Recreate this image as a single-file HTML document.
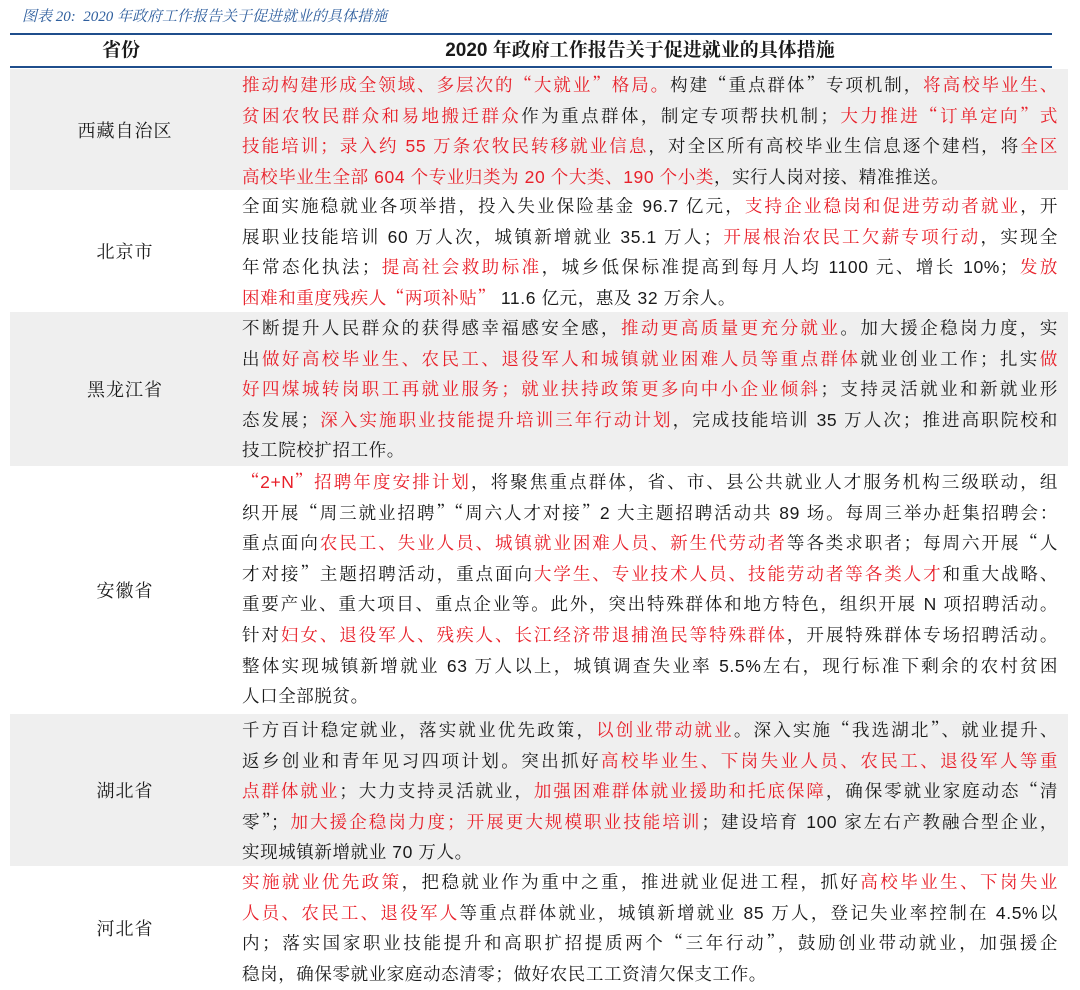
<!DOCTYPE html>
<html><head><meta charset="utf-8"><style>
*{margin:0;padding:0;box-sizing:border-box}
body{width:1080px;height:990px;background:#fff;font-family:"Liberation Sans","Noto Serif CJK SC",serif;color:#1a1a1a;position:relative;overflow:hidden}
.title{position:absolute;left:22px;top:5px;font-size:15px;font-style:italic;color:#2f5f9e;font-family:"Liberation Serif","Noto Serif CJK SC",serif}
.hl{position:absolute;left:10px;width:1042px;height:2px;background:#1f4e8c}
.hdr{position:absolute;top:35px;height:32px;font-size:19px;font-weight:bold;line-height:32px;text-align:center}
.row{position:absolute;left:10px;width:1058px}
.g{background:#efefef}
.prov{position:absolute;left:0;width:230px;top:0;bottom:0;display:flex;align-items:center;justify-content:center;font-size:18px;letter-spacing:1px}
.txt{position:absolute;left:232px;width:816px;top:1px;font-size:17.5px}
.txt div{height:30.6px;line-height:30.6px;text-align:justify;text-align-last:justify;white-space:nowrap;letter-spacing:0.6px}
.txt div.l{text-align-last:left}
r{color:#e8202a}
i{font-style:normal;font-family:"Noto Serif CJK SC",serif}
</style></head><body>
<div class="title">图表 20:&nbsp; 2020 年政府工作报告关于促进就业的具体措施</div>
<div class="hl" style="top:33px"></div>
<div class="hdr" style="left:10px;width:222px">省份</div>
<div class="hdr" style="left:232px;width:816px">2020 年政府工作报告关于促进就业的具体措施</div>
<div class="hl" style="top:66px"></div>

<div class="row g" style="top:69px;height:121px"><div class="prov">西藏自治区</div><div class="txt">
<div><r>推动构建形成全领域、多层次的<i>“</i>大就业<i>”</i>格局。</r>构建<i>“</i>重点群体<i>”</i>专项机制，<r>将高校毕业生、</r></div>
<div><r>贫困农牧民群众和易地搬迁群众</r>作为重点群体，制定专项帮扶机制；<r>大力推进<i>“</i>订单定向<i>”</i>式</r></div>
<div><r>技能培训；录入约 55 万条农牧民转移就业信息</r>，对全区所有高校毕业生信息逐个建档，将<r>全区</r></div>
<div class="l"><r>高校毕业生全部 604 个专业归类为 20 个大类、190 个小类</r>，实行人岗对接、精准推送。</div>
</div></div>

<div class="row" style="top:190px;height:122px"><div class="prov">北京市</div><div class="txt">
<div>全面实施稳就业各项举措，投入失业保险基金 96.7 亿元，<r>支持企业稳岗和促进劳动者就业</r>，开</div>
<div>展职业技能培训 60 万人次，城镇新增就业 35.1 万人；<r>开展根治农民工欠薪专项行动</r>，实现全</div>
<div>年常态化执法；<r>提高社会救助标准</r>，城乡低保标准提高到每月人均 1100 元、增长 10%；<r>发放</r></div>
<div class="l"><r>困难和重度残疾人<i>“</i>两项补贴<i>”</i></r> 11.6 亿元，惠及 32 万余人。</div>
</div></div>

<div class="row g" style="top:312px;height:154px"><div class="prov">黑龙江省</div><div class="txt">
<div>不断提升人民群众的获得感幸福感安全感，<r>推动更高质量更充分就业</r>。加大援企稳岗力度，实</div>
<div>出<r>做好高校毕业生、农民工、退役军人和城镇就业困难人员等重点群体</r>就业创业工作；扎实<r>做</r></div>
<div><r>好四煤城转岗职工再就业服务；就业扶持政策更多向中小企业倾斜</r>；支持灵活就业和新就业形</div>
<div>态发展；<r>深入实施职业技能提升培训三年行动计划</r>，完成技能培训 35 万人次；推进高职院校和</div>
<div class="l">技工院校扩招工作。</div>
</div></div>

<div class="row" style="top:466px;height:248px"><div class="prov">安徽省</div><div class="txt">
<div><r><i>“</i>2+N<i>”</i>招聘年度安排计划</r>，将聚焦重点群体，省、市、县公共就业人才服务机构三级联动，组</div>
<div>织开展<i>“</i>周三就业招聘<i>”“</i>周六人才对接<i>”</i>2 大主题招聘活动共 89 场。每周三举办赶集招聘会：</div>
<div>重点面向<r>农民工、失业人员、城镇就业困难人员、新生代劳动者</r>等各类求职者；每周六开展<i>“</i>人</div>
<div>才对接<i>”</i>主题招聘活动，重点面向<r>大学生、专业技术人员、技能劳动者等各类人才</r>和重大战略、</div>
<div>重要产业、重大项目、重点企业等。此外，突出特殊群体和地方特色，组织开展 N 项招聘活动。</div>
<div>针对<r>妇女、退役军人、残疾人、长江经济带退捕渔民等特殊群体</r>，开展特殊群体专场招聘活动。</div>
<div>整体实现城镇新增就业 63 万人以上，城镇调查失业率 5.5%左右，现行标准下剩余的农村贫困</div>
<div class="l">人口全部脱贫。</div>
</div></div>

<div class="row g" style="top:714px;height:152px"><div class="prov">湖北省</div><div class="txt">
<div>千方百计稳定就业，落实就业优先政策，<r>以创业带动就业</r>。深入实施<i>“</i>我选湖北<i>”</i>、就业提升、</div>
<div>返乡创业和青年见习四项计划。突出抓好<r>高校毕业生、下岗失业人员、农民工、退役军人等重</r></div>
<div><r>点群体就业</r>；大力支持灵活就业，<r>加强困难群体就业援助和托底保障</r>，确保零就业家庭动态<i>“</i>清</div>
<div>零<i>”</i>；<r>加大援企稳岗力度；开展更大规模职业技能培训</r>；建设培育 100 家左右产教融合型企业，</div>
<div class="l">实现城镇新增就业 70 万人。</div>
</div></div>

<div class="row" style="top:866px;height:124px"><div class="prov">河北省</div><div class="txt">
<div><r>实施就业优先政策</r>，把稳就业作为重中之重，推进就业促进工程，抓好<r>高校毕业生、下岗失业</r></div>
<div><r>人员、农民工、退役军人</r>等重点群体就业，城镇新增就业 85 万人，登记失业率控制在 4.5%以</div>
<div>内；落实国家职业技能提升和高职扩招提质两个<i>“</i>三年行动<i>”</i>，鼓励创业带动就业，加强援企</div>
<div class="l">稳岗，确保零就业家庭动态清零；做好农民工工资清欠保支工作。</div>
</div></div>
</body></html>
